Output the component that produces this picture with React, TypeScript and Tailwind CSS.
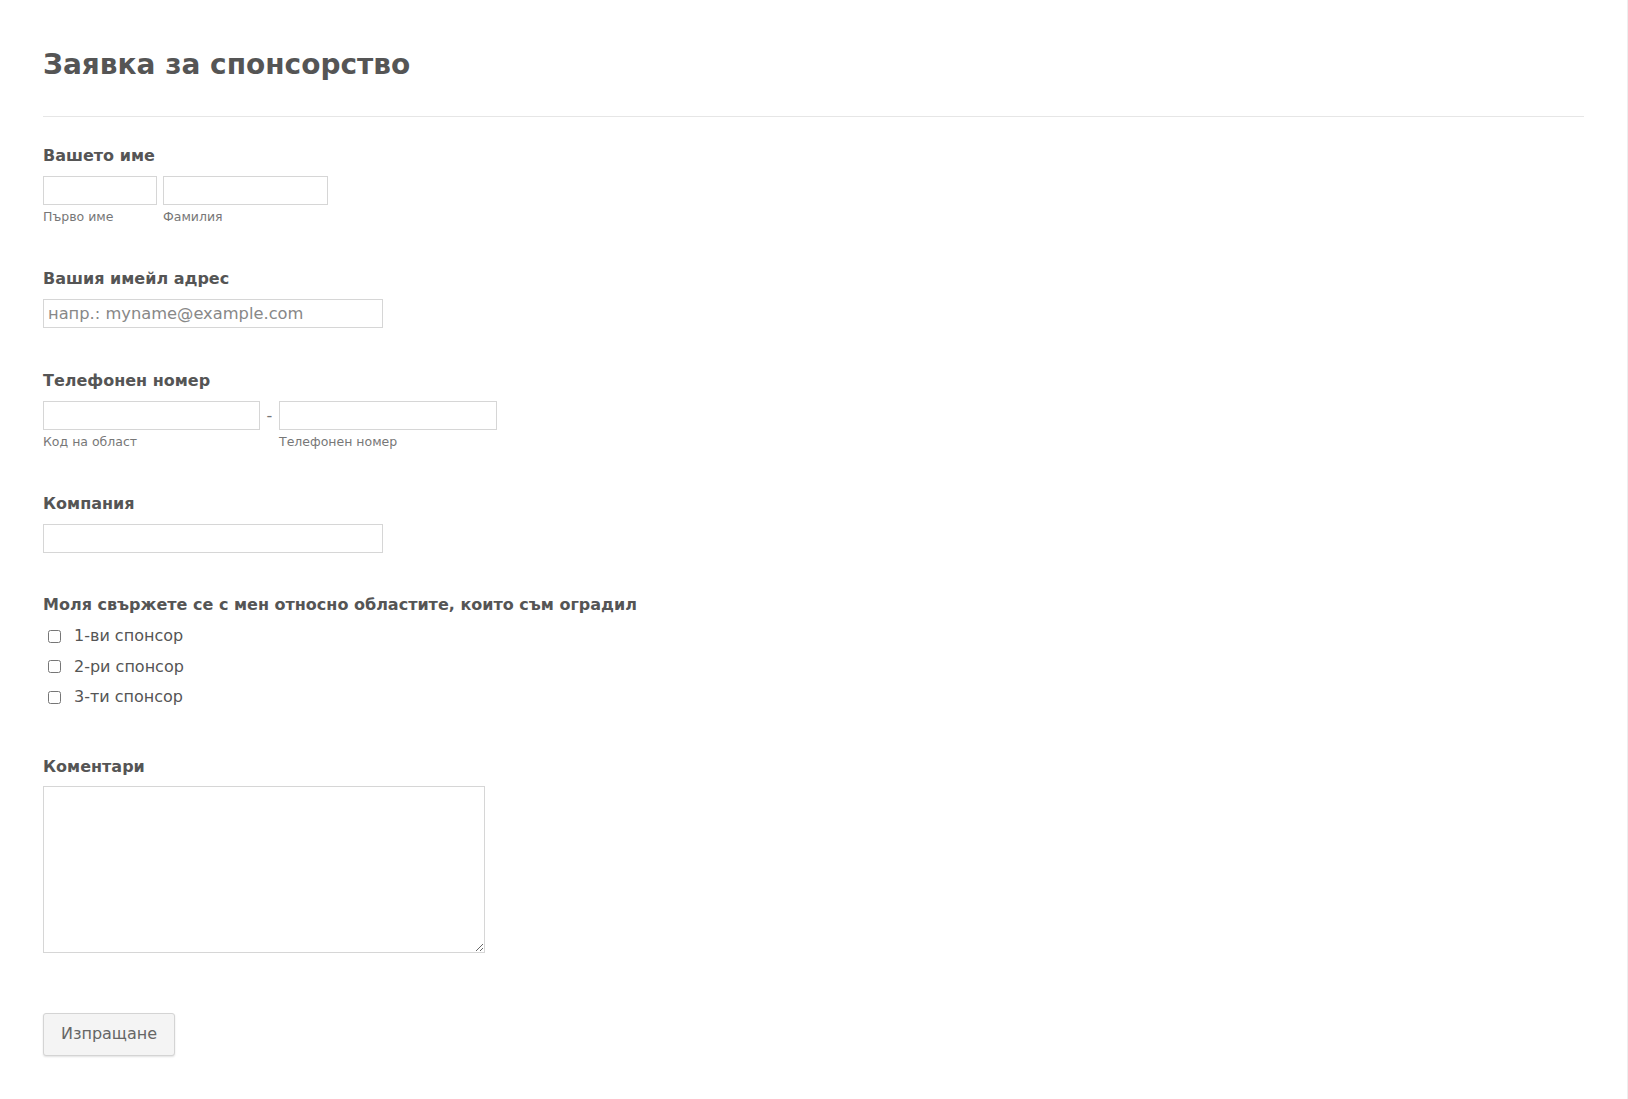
import React from "react";

const font = { fontFamily: '"DejaVu Sans", Verdana, sans-serif' };

function Label({ children }: { children: React.ReactNode }) {
  return (
    <div className="text-[16px] font-bold leading-[20px] text-[#555] mb-[10px]">
      {children}
    </div>
  );
}

function Sub({ children }: { children: React.ReactNode }) {
  return <div className="text-[12.5px] leading-[16px] text-[#777] mt-[4px]">{children}</div>;
}

const inputCls =
  "h-[29px] border border-[#d6d6d6] bg-white px-[4px] text-[16.3px] text-[#555] outline-none placeholder:text-[#888]";

export default function App() {
  const sponsors = ["1-ви спонсор", "2-ри спонсор", "3-ти спонсор"];

  return (
    <div
      style={font}
      className="min-h-[1099px] w-[1628px] bg-white border-r border-b border-[#eeeeee] px-[43px] pt-[47px] pb-[43px]"
    >
      {/* Header */}
      <h1 className="text-[28px] font-bold leading-[36px] text-[#555]">Заявка за спонсорство</h1>
      <div className="mt-[33px] border-t border-[#e6e6e6]" />

      {/* Name */}
      <div className="mt-[29px]">
        <Label>Вашето име</Label>
        <div className="flex gap-[6px]">
          <div>
            <input className={`${inputCls} w-[114px]`} />
            <Sub>Първо име</Sub>
          </div>
          <div>
            <input className={`${inputCls} w-[165px]`} />
            <Sub>Фамилия</Sub>
          </div>
        </div>
      </div>

      {/* Email */}
      <div className="mt-[44px]">
        <Label>Вашия имейл адрес</Label>
        <input className={`${inputCls} w-[340px]`} placeholder="напр.: myname@example.com" />
      </div>

      {/* Phone */}
      <div className="mt-[43px]">
        <Label>Телефонен номер</Label>
        <div className="flex">
          <div>
            <input className={`${inputCls} w-[217px]`} />
            <Sub>Код на област</Sub>
          </div>
          <div className="w-[19px] h-[29px] flex items-center justify-center text-[16px] text-[#777]">-</div>
          <div>
            <input className={`${inputCls} w-[218px]`} />
            <Sub>Телефонен номер</Sub>
          </div>
        </div>
      </div>

      {/* Company */}
      <div className="mt-[44px]">
        <Label>Компания</Label>
        <input className={`${inputCls} w-[340px]`} />
      </div>

      {/* Checkboxes */}
      <div className="mt-[42px]">
        <div className="text-[16px] font-bold leading-[20px] text-[#555]">
          Моля свържете се с мен относно областите, които съм оградил
        </div>
        <div className="mt-[6px]">
          {sponsors.map((s) => (
            <label key={s} className="flex items-center h-[30.5px] text-[16px] text-[#555]">
              <input type="checkbox" className="ml-[5px] mr-[13px] w-[13px] h-[13px]" />
              {s}
            </label>
          ))}
        </div>
      </div>

      {/* Comments */}
      <div className="mt-[44px]">
        <div className="text-[16px] font-bold leading-[20px] text-[#555] mb-[9px]">Коментари</div>
        <textarea className="block w-[442px] h-[167px] border border-[#d6d6d6] p-[4px] text-[15px] outline-none" />
      </div>

      {/* Submit */}
      <button className="mt-[60px] w-[132px] h-[43px] rounded-[3px] border border-[#d4d4d4] bg-[#f4f4f4] text-[16px] text-[#666] shadow-[0_1px_2px_rgba(0,0,0,0.12)]">
        Изпращане
      </button>
    </div>
  );
}
